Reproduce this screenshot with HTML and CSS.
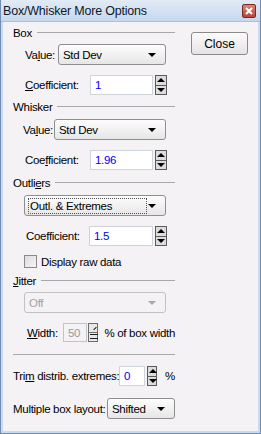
FILE: index.html
```html
<!DOCTYPE html>
<html lang="en">
<head>
    <meta charset="UTF-8">
    <title>Box/Whisker More Options</title>
    <link rel="stylesheet" href="styles.css">
</head>
<body>
    <div class="window">
        <div class="titlebar">
            <span class="title">Box/Whisker More Options</span>
            <span class="xbtn">
                <svg width="8" height="8" viewBox="0 0 8 8"><path d="M1 1 L7 7 M7 1 L1 7" stroke="#fff" stroke-width="2"/></svg>
            </span>
        </div>

        <div class="main">
            <div class="left">
                <!-- Box -->
                <div class="group-head g-box"><span>Box</span><div class="rule"></div></div>
                <div class="row r-value1">
                    <span class="lbl lbl-value">Va<u>l</u>ue:</span>
                    <div class="combo w108"><span>Std Dev</span><i class="arrow"></i></div>
                </div>
                <div class="row r-coef">
                    <span class="lbl lbl-coef"><u>C</u>oefficient:</span>
                    <div class="field w63">1</div>
                    <div class="spin"><b class="up"></b><b class="down"></b></div>
                </div>

                <!-- Whisker -->
                <div class="group-head g-whisker"><span>Whisker</span><div class="rule"></div></div>
                <div class="row r-value2">
                    <span class="lbl lbl-value2">Va<u>l</u>ue:</span>
                    <div class="combo w112"><span>Std Dev</span><i class="arrow"></i></div>
                </div>
                <div class="row r-coef">
                    <span class="lbl lbl-coef">Coe<u>f</u>ficient:</span>
                    <div class="field w63">1.96</div>
                    <div class="spin"><b class="up"></b><b class="down"></b></div>
                </div>

                <!-- Outliers -->
                <div class="group-head g-outliers"><span>Outli<u>e</u>rs</span><div class="rule"></div></div>
                <div class="row r-sel">
                    <div class="combo w142"><span class="focus">Outl. &amp; Extremes</span><i class="arrow"></i></div>
                </div>
                <div class="row r-coef">
                    <span class="lbl lbl-coef3">Coefficient:</span>
                    <div class="field w64">1.5</div>
                    <div class="spin"><b class="up"></b><b class="down"></b></div>
                </div>
                <div class="row r-check">
                    <span class="check"></span>
                    <span>Display raw data</span>
                </div>

                <!-- Jitter -->
                <div class="group-head g-jitter"><span><u>J</u>itter</span><div class="rule"></div></div>
                <div class="row r-sel2">
                    <div class="combo w142 disabled"><span>Off</span><i class="arrow"></i></div>
                </div>
                <div class="row r-width">
                    <span class="lbl lbl-width"><u>W</u>idth:</span>
                    <div class="field w27 disabled">50</div>
                    <div class="spin spin-off"><b class="up"></b><b class="down"></b></div>
                    <span class="after">% of box width</span>
                </div>

                <div class="sep"></div>

                <div class="row r-trim">
                    <span class="lbl lbl-trim">Tri<u>m</u> distrib. extremes:</span>
                    <div class="field w30">0</div>
                    <div class="spin"><b class="up"></b><b class="down"></b></div>
                    <span class="after pct">%</span>
                </div>
                <div class="row r-multi">
                    <span class="lbl lbl-multi">Multiple box layout:</span>
                    <div class="combo w71"><span>Shifted</span><i class="arrow"></i></div>
                </div>
            </div>

            <div class="right">
                <button class="close">Close</button>
            </div>
        </div>
    </div>
</body>
</html>
```

FILE: styles.css
```css
body {
    margin: 0;
    font-family: "Liberation Sans", Arial, sans-serif;
    font-size: 11.5px;
    letter-spacing: -0.3px;
    white-space: nowrap;
    color: #000;
}
u {
    text-decoration: underline;
    text-underline-offset: 1px;
}
.window {
    width: 261px;
    height: 434px;
    box-sizing: border-box;
    background: #f5f2f5;
    border: 1px solid #6f8db5;
    border-top: none;
    display: flex;
    flex-direction: column;
}
.titlebar {
    height: 21px;
    display: flex;
    align-items: center;
    justify-content: space-between;
    padding: 0 4px 0 2px;
    background: linear-gradient(#e2ebf6, #c7d8ee);
    border-bottom: 1px solid #aebfd6;
}
.title {
    font-size: 12.5px;
    letter-spacing: -0.2px;
    color: #101828;
}
.xbtn {
    width: 12px;
    height: 12px;
    border: 1px solid #7a2a20;
    border-radius: 2px;
    background: linear-gradient(#d98676, #b8453a);
    display: flex;
    align-items: center;
    justify-content: center;
}
.main {
    flex: 1;
    display: flex;
    border-left: 2px solid #c9daf0;
    border-right: 2px solid #c9daf0;
    border-bottom: 2px solid #c9daf0;
}
.left {
    width: 162px;
    padding-left: 10px;
}
.right {
    padding-left: 16px;
}
.close {
    margin-top: 10px;
    width: 57px;
    height: 23px;
    font-family: inherit;
    font-size: 12px;
    border: 1px solid #8a8a8a;
    border-radius: 3px;
    background: linear-gradient(#fbfbfb, #e4e4e4);
    padding: 0;
}

/* group headers with etched rule */
.group-head {
    display: flex;
    align-items: center;
    height: 14px;
}
.rule {
    flex: 1;
    border-top: 1px solid #a9a9a9;
    margin-left: 5px;
    margin-top: -1px;
}
.g-box { margin-top: 4px; }
.g-whisker { margin-top: 5px; }
.g-outliers { margin-top: 6px; }
.g-jitter { margin-top: 6px; }

.row {
    display: flex;
    align-items: center;
}
.lbl { flex: none; }
.lbl-value { width: 33px; padding-left: 12px; }
.lbl-value2 { width: 31px; padding-left: 10px; }
.lbl-coef { width: 65px; padding-left: 12px; }
.lbl-coef3 { width: 63px; padding-left: 13px; }
.lbl-width { width: 36px; padding-left: 14px; }
.lbl-trim { width: 106px; }
.lbl-multi { width: 94px; }

.r-value1 { margin-top: 4px; height: 21px; }
.r-value2 { margin-top: 5px; height: 21px; }
.r-coef { margin-top: 10px; height: 20px; }
.r-sel { margin-top: 5px; height: 21px; padding-left: 11px; }
.r-check { margin-top: 9px; height: 13px; padding-left: 11px; }
.r-sel2 { margin-top: 4px; height: 21px; padding-left: 11px; }
.r-width { margin-top: 10px; height: 19px; }
.r-trim { margin-top: 11px; height: 20px; }
.r-multi { margin-top: 12px; height: 21px; }

/* combo boxes */
.combo {
    box-sizing: border-box;
    height: 21px;
    border: 1px solid #8e8e8e;
    border-radius: 3px;
    background: linear-gradient(#fdfdfd, #e6e6e6);
    display: flex;
    align-items: center;
    justify-content: space-between;
    padding: 0 9px 0 4px;
}
.w108 { width: 108px; }
.w112 { width: 112px; }
.w142 { width: 142px; }
.w71 { width: 71px; }
.arrow {
    width: 0;
    height: 0;
    border-left: 4px solid transparent;
    border-right: 4px solid transparent;
    border-top: 4px solid #000;
}
.focus {
    outline: 1px dotted #555;
    outline-offset: 1px;
    width: 115px;
    margin-left: 1px;
}
.combo.disabled {
    border-color: #c2c2c2;
    color: #a3a3a3;
    background: #f5f2f5;
}
.combo.disabled .arrow { border-top-color: #a8a8a8; }

/* text fields */
.field {
    box-sizing: border-box;
    height: 20px;
    border: 1px solid #cfd3db;
    background: #fff;
    color: #0000f0;
    padding-left: 4px;
    display: flex;
    align-items: center;
}
.w63 { width: 63px; }
.w64 { width: 64px; }
.w27 { width: 27px; height: 19px; }
.w30 { width: 30px; }
.field.disabled {
    background: #f5f2f5;
    border-color: #c4c4c4;
    color: #9a9a9a;
}

/* spin buttons */
.spin {
    margin-left: 2px;
    width: 12px;
    height: 20px;
    display: flex;
    flex-direction: column;
    background: #5a5a5a;
    padding: 1px;
    box-sizing: border-box;
    gap: 1px;
}
.spin b {
    flex: 1;
    background: #dcdcdc;
    position: relative;
}
.spin b::after {
    content: "";
    position: absolute;
    left: 1px;
    top: 2px;
    border-left: 4px solid transparent;
    border-right: 4px solid transparent;
}
.spin .up::after { border-bottom: 4px solid #000; }
.spin .down::after { border-top: 4px solid #000; top: 2px; }
.spin-off {
    height: 19px;
    margin-left: 1px;
    background: #6d6d6d;
}
.spin-off b { background: #e8e8e8; }
.spin-off .up::after {
    border: none;
    width: 4px;
    height: 1px;
    background: #222;
    transform: rotate(-45deg);
    left: 4px;
    top: 4px;
}
.spin-off .down::after {
    border: none;
    width: 8px;
    height: 1px;
    background: #222;
    left: 1px;
    top: 1px;
    box-shadow: 0 4px 0 #222;
}
.after { margin-left: 6px; }
.pct { margin-left: 8px; }

.check {
    width: 11px;
    height: 11px;
    border: 1px solid #8a8a8a;
    background: linear-gradient(135deg, #dcdcdc, #f4f4f4);
    margin-right: 4px;
}

.sep {
    margin-top: 12px;
    border-top: 1px solid #a9a9a9;
}
```
